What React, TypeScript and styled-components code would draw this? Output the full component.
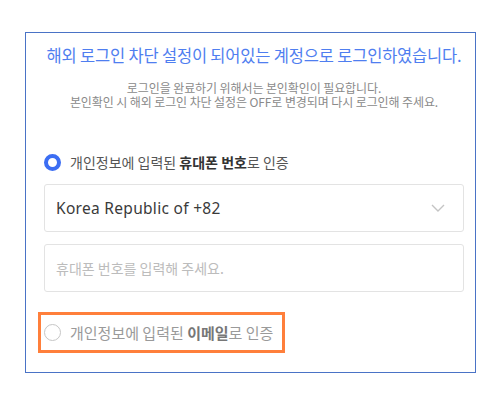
import styled, { createGlobalStyle } from 'styled-components';

const GlobalStyle = createGlobalStyle`
  body {
    margin: 0;
    background: #ffffff;
    font-family: 'Noto Sans', 'Noto Sans CJK KR', sans-serif;
  }
`;

const Chevron = () => (
  <svg width="14" height="8" viewBox="0 0 14 8" fill="none">
    <polyline points="1,1 7,7 13,1" stroke="#c4c4c4" strokeWidth="1.4" />
  </svg>
);

export default function App() {
  return (
    <>
      <GlobalStyle />
      <Page>
        <Card>
          <Title>해외 로그인 차단 설정이 되어있는 계정으로 로그인하였습니다.</Title>
          <Notice>
            로그인을 완료하기 위해서는 본인확인이 필요합니다.
            <br />
            본인확인 시 해외 로그인 차단 설정은 OFF로 변경되며 다시 로그인해 주세요.
          </Notice>

          <RadioRow>
            <Radio $checked />
            <Label>
              개인정보에 입력된 <strong>휴대폰 번호</strong>로 인증
            </Label>
          </RadioRow>

          <Field>
            <FieldText>Korea Republic of +82</FieldText>
            <Chevron />
          </Field>
          <Field>
            <FieldText $placeholder>휴대폰 번호를 입력해 주세요.</FieldText>
          </Field>

          <RadioRow $highlight>
            <Radio />
            <Label $muted>
              개인정보에 입력된 <strong>이메일</strong>로 인증
            </Label>
          </RadioRow>
        </Card>
      </Page>
    </>
  );
}

const Page = styled.div`
  padding: 32px 0 0 25px;
`;

const Card = styled.div`
  box-sizing: border-box;
  width: 451px;
  height: 341px;
  border: 1px solid #4a73c6;
  padding: 12px 11px 0 18px;
  display: flex;
  flex-direction: column;
`;

const Title = styled.h1`
  margin: 0;
  font-family: 'Noto Sans CJK KR', sans-serif;
  font-size: 16.5px;
  font-weight: 400;
  line-height: 20px;
  color: #4f7ef0;
  text-align: center;
  letter-spacing: -0.2px;
  white-space: nowrap;
`;

const Notice = styled.p`
  margin: 16px 0 0;
  font-family: 'Noto Sans CJK KR', sans-serif;
  font-size: 12px;
  line-height: 14px;
  color: #8a8a8a;
  text-align: center;
  letter-spacing: -0.1px;
  white-space: nowrap;
`;

const RadioRow = styled.div<{ $highlight?: boolean }>`
  display: flex;
  align-items: center;
  gap: 9px;
  height: ${({ $highlight }) => ($highlight ? '29px' : '20px')};
  margin-top: ${({ $highlight }) => ($highlight ? '26px' : '43px')};
  align-self: flex-start;
  padding-right: ${({ $highlight }) => ($highlight ? '6px' : '0')};
  outline: ${({ $highlight }) => ($highlight ? '3px solid #ff7f3b' : 'none')};
  outline-offset: 3px;
`;

const Radio = styled.span<{ $checked?: boolean }>`
  box-sizing: border-box;
  width: 17px;
  height: 17px;
  border-radius: 50%;
  background: #ffffff;
  border: ${({ $checked }) => ($checked ? '4.5px solid #3c6ef3' : '1px solid #c6c6c6')};
  flex-shrink: 0;
`;

const Label = styled.span<{ $muted?: boolean }>`
  font-family: 'Noto Sans CJK KR', sans-serif;
  font-size: ${({ $muted }) => ($muted ? '15px' : '14px')};
  line-height: 20px;
  color: ${({ $muted }) => ($muted ? '#9a9a9a' : '#555555')};
  white-space: nowrap;

  strong {
    font-weight: 700;
    color: ${({ $muted }) => ($muted ? '#777777' : '#333333')};
  }
`;

const Field = styled.div`
  box-sizing: border-box;
  height: 48px;
  margin-top: 12px;
  border: 1px solid #e3e3e3;
  border-radius: 3px;
  padding: 0 18px 0 11px;
  display: flex;
  align-items: center;
  justify-content: space-between;
`;

const FieldText = styled.span<{ $placeholder?: boolean }>`
  font-family: ${({ $placeholder }) =>
    $placeholder ? "'Noto Sans CJK KR', sans-serif" : "'Noto Sans', 'Noto Sans CJK KR', sans-serif"};
  font-size: ${({ $placeholder }) => ($placeholder ? '14px' : '15.5px')};
  letter-spacing: ${({ $placeholder }) => ($placeholder ? '0' : '0.3px')};
  color: ${({ $placeholder }) => ($placeholder ? '#bcbcbc' : '#3a3a3a')};
`;
